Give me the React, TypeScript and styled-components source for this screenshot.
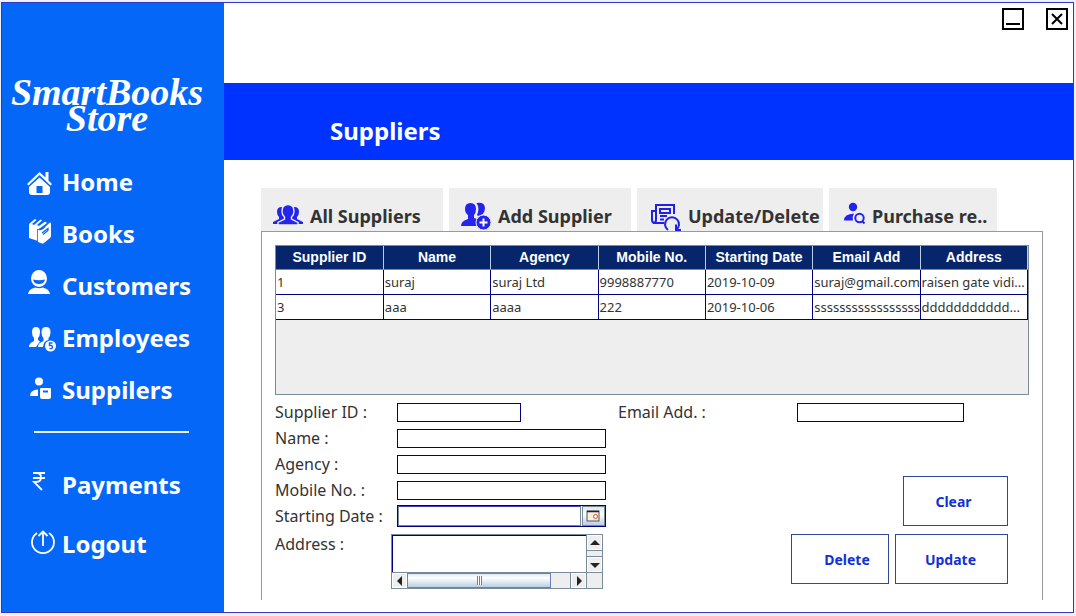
import React from "react";
import styled, { createGlobalStyle } from "styled-components";

const GlobalStyle = createGlobalStyle`
  *, *::before, *::after { box-sizing: border-box; }
  body {
    margin: 0;
    padding: 2px 2px 3px 1px;
    background: #eef1fb;
    color: #333;
    font-family: "Noto Sans", "Open Sans", sans-serif;
  }
  button, input, textarea { font: inherit; margin: 0; }
`;

const Window = styled.div`
  display: flex;
  min-height: calc(100vh - 5px);
  border: 1px solid #3535bd;
  background: #fff;
`;

const Sidebar = styled.aside`
  flex: 0 0 222px;
  padding-top: 76px;
  background: #0567f8;
  color: #fff;
`;

const Logo = styled.h1`
  margin: 0 0 25px;
  padding-right: 12px;
  font: italic 700 38px/26px "Liberation Serif", serif;
  text-align: center;
`;

const Nav = styled.nav`
  display: flex;
  flex-direction: column;
`;

const NavLink = styled.a<{ $tall?: boolean }>`
  display: flex;
  align-items: center;
  gap: 8px;
  height: ${(p) => (p.$tall ? 59 : 52)}px;
  padding-left: 24px;
  color: #fff;
  font-size: 24px;
  font-weight: 700;
  line-height: 32px;
  text-decoration: none;

  svg { flex: none; overflow: visible; }
`;

const Divider = styled.hr`
  width: 155px;
  height: 2px;
  margin: 15px 0 22px 32px;
  border: 0;
  background: #e8f1ff;
`;

const Main = styled.main`
  flex: 1;
  min-width: 0;
  display: flex;
  flex-direction: column;
`;

const TitleBar = styled.div`
  display: flex;
  justify-content: flex-end;
  gap: 22px;
  height: 80px;
  padding: 5px 5px 0 0;
`;

const WindowButton = styled.button`
  width: 22px;
  height: 22px;
  padding: 0;
  border: 2px solid #000;
  background: #fff;

  svg { display: block; }
`;

const Banner = styled.header`
  height: 77px;
  padding: 32px 0 0 106px;
  background: #0033ff;
`;

const Title = styled.h2`
  margin: 0;
  color: #fff;
  font-size: 24px;
  font-weight: 700;
  line-height: 32px;
`;

const Content = styled.section`
  flex: 1;
  display: flex;
  flex-direction: column;
  padding: 28px 30px 12px 37px;
`;

const Tabs = styled.div`
  display: flex;
  gap: 6px;
`;

const Tab = styled.button<{ $width: number }>`
  display: flex;
  align-items: center;
  gap: 7px;
  width: ${(p) => p.$width}px;
  height: 43px;
  padding: 12px 0 0 12px;
  overflow: hidden;
  border: 0;
  background: #eee;
  color: #333;
  font-size: 18px;
  font-weight: 700;
  white-space: nowrap;

  svg { flex: none; }
`;

const Panel = styled.div`
  flex: 1;
  padding: 13px 13px 0;
  border: 1px solid #999;
  border-bottom: 0;
`;

const TableFrame = styled.div`
  height: 150px;
  border: 1px solid #7a8a99;
  background: #eee;
`;

const Table = styled.table`
  width: 100%;
  border-collapse: collapse;
  table-layout: fixed;
  background: #fff;
`;

const HeadCell = styled.th`
  height: 23px;
  padding: 0;
  border-right: 1px solid #b8cfe5;
  border-bottom: 1px solid #7a8a99;
  background: #07256b;
  color: #fff;
  font: 700 14px/16px "Liberation Sans", Arial, sans-serif;
`;

const Cell = styled.td`
  height: 25px;
  padding: 0 0 0 1px;
  border-right: 1px solid #000080;
  border-bottom: 1px solid #000080;
  font-size: 13px;
  line-height: 20px;
  white-space: nowrap;
`;

const Form = styled.form`
  display: flex;
  padding-top: 4px;
`;

const Fields = styled.div`
  flex: 0 0 343px;
`;

const Side = styled.div`
  flex: 1;
  display: flex;
  flex-direction: column;
  justify-content: space-between;
  padding-right: 21px;
`;

const Row = styled.div`
  display: flex;
  align-items: center;
  height: 26px;
`;

const AddressRow = styled(Row)`
  align-items: flex-start;
  height: 60px;
  padding-top: 5px;
`;

const Label = styled.label<{ $width: number }>`
  flex: 0 0 ${(p) => p.$width}px;
  font-size: 16px;
  line-height: 20px;
  white-space: nowrap;
`;

const Input = styled.input<{ $width: number }>`
  width: ${(p) => p.$width}px;
  height: 19px;
  padding: 0 2px;
  border: 1px solid #000080;
  background: #fff;
  font-size: 14px;
  outline: 0;
`;

const DateField = styled.div`
  display: flex;
  width: 209px;
  height: 22px;
  border: 1px solid #000080;
  background: #fff;
`;

const DateInput = styled.input`
  flex: 1;
  min-width: 0;
  padding: 0 2px;
  border: 1px solid #7a8a99;
  border-top-color: #3d3dc8;
  background: #fff;
  font-size: 14px;
  outline: 0;
`;

const DateButton = styled.button`
  width: 23px;
  margin-left: 1px;
  padding: 0 0 0 3px;
  border: 1px solid #7a8a99;
  background: linear-gradient(#dde8f3, #fff 40%, #b8cfe5);

  svg { display: block; }
`;

const ScrollPane = styled.div`
  display: grid;
  grid-template-columns: 1fr 16px;
  grid-template-rows: 1fr 16px;
  width: 212px;
  height: 55px;
  border: 1px solid #7a8a99;
  background: #eee;
`;

const TextArea = styled.textarea`
  width: 100%;
  height: 100%;
  padding: 1px 2px;
  border: 0;
  border-top: 1px solid #000080;
  border-left: 1px solid #000080;
  background: #fff;
  font-size: 14px;
  overflow: hidden;
  outline: 0;
  resize: none;
`;

const VerticalBar = styled.div`
  display: flex;
  flex-direction: column;
  justify-content: space-between;
  border-left: 1px solid #7a8a99;
`;

const HorizontalBar = styled.div`
  display: flex;
  border-top: 1px solid #7a8a99;
`;

const Corner = styled.div`
  border-top: 1px solid #7a8a99;
  border-left: 1px solid #7a8a99;
`;

const Arrow = styled.button`
  display: grid;
  place-items: center;
  flex: 0 0 15px;
  min-width: 0;
  padding: 0;
  border: 1px solid #fff;
  background: #eee;
`;

const Thumb = styled.div`
  display: flex;
  align-items: center;
  justify-content: center;
  flex: 0 0 144px;
  border: 1px solid #6382bf;
  background: linear-gradient(#dde8f3, #fff 30%, #b8cfe5);
`;

const Grip = styled.span`
  width: 5px;
  height: 9px;
  background: repeating-linear-gradient(90deg, #6382bf 0 1px, #fff 1px 2px);
`;

const Track = styled.div`
  flex: 1;
  border-right: 1px solid #7a8a99;
`;

const VerticalTrack = styled.div`
  flex: 1;
  border-top: 1px solid #7a8a99;
  border-bottom: 1px solid #7a8a99;
`;

const Actions = styled.div`
  display: grid;
  grid-template-columns: 98px 113px;
  justify-content: end;
  gap: 8px 6px;
  padding-bottom: 5px;
`;

const ActionButton = styled.button<{ $kind?: "clear" | "delete" }>`
  height: 50px;
  padding: 0 2px 0 ${(p) => (p.$kind === "delete" ? 16 : 0)}px;
  border: 1px solid #2c489c;
  background: #fff;
  color: #1230d8;
  font-size: 14px;
  font-weight: 700;
  ${(p) => p.$kind === "clear" && "grid-column: 2; justify-self: end; width: 105px; padding-right: 4px;"}
`;

const iconProps = { width: 28, height: 28, viewBox: "0 0 28 28", fill: "currentColor", "aria-hidden": true };

const HomeIcon = () => (
  <svg {...iconProps}>
    <path d="M1 16 13.5 4 19.500 9.500V4h3v8.500L26 16l-1.500 1.500-11-10.500L2.500 17.500z" />
    <path d="M13.500 9.500 24 19v5q0 3-3 3H6q-3 0-3-3v-5zM10.500 18v7h6v-7z" fillRule="evenodd" />
  </svg>
);

const BooksIcon = () => (
  <svg {...iconProps} viewBox="0 4 28 28">
    <path d="M3 9q0-1 1-2l5-4 1.500 1L6 8l2 1 6.500-5.500 1.500 1L11 9l2 1 6-4.500 2 1.500-6 4.500-3 2V25l-3-1-6-2z" />
    <path d="M12 14q5 1 8-4l4-3.500q1 0 1 1V20q0 1-1 2l-6 5q-1 .5-2 .5l-4-1.500z" />
    <path d="m16 17 6-4.500v2l-5 4" fill="none" stroke="#0567f8" strokeWidth="1.200" />
    <path d="M11.500 13v12" stroke="#0567f8" strokeWidth=".8" />
  </svg>
);

const CustomerIcon = () => (
  <svg {...iconProps} viewBox="0 3 28 28">
    <ellipse cx="13" cy="9.500" rx="8" ry="8.500" />
    <path d="M7 10.500q6 1.500 12 0-1 4.500-6 4.500t-6-4.500z" fill="#0567f8" />
    <path d="M2 25q1-5 6-6l1-.5q4 1.500 8 0l1 .5q5 1 6 6z" />
  </svg>
);

const EmployeesIcon = () => (
  <svg {...iconProps}>
    <path d="M6 8q0-5 4-5t4 5q0 4-2 6v2l2 1.500-4 5.500H3q0-4 5-6v-3q-2-2-2-6z" />
    <path d="M15.500 8q0-5 4.500-5t4.500 5q0 4-2 6v2q-5 1-5.500 7h-5q0-4 5.500-6v-3q-2-2-2-6z" />
    <circle cx="24.500" cy="22" r="5.500" />
    <path d="M26.500 19h-3v2.500q3-.5 3 1.500t-3 1.500" fill="none" stroke="#0567f8" strokeWidth="1.400" />
  </svg>
);

const SupplierIcon = () => (
  <svg {...iconProps}>
    <circle cx="13" cy="5.500" r="4" />
    <path d="M4 20q0-6 8-6.500v6.500z" />
    <path d="M15 12q-1 0-1 1v8q0 2 2 2h7q2 0 2-2v-8q0-1-1-1zM17 14.500h5v2h-5z" fillRule="evenodd" />
  </svg>
);

const RupeeIcon = () => (
  <svg {...iconProps} fill="none" stroke="currentColor" strokeWidth="1.800">
    <path d="M7 2h12M7 7h12M7 2h4q4 0 4 4.500T10 11H8l8 8" />
  </svg>
);

const LogoutIcon = () => (
  <svg {...iconProps} fill="none" stroke="currentColor" strokeWidth="1.800">
    <path d="M11 3a11 11 0 1 0 12 0M17 16V1.500M12.500 6 17 1.500 21.500 6" />
  </svg>
);

const tabIcon = { width: 30, height: 30, viewBox: "0 0 30 30", fill: "#2424ee", "aria-hidden": true };

const GroupIcon = () => (
  <svg {...tabIcon}>
    <path d="M4 11q0-5 4.500-5T13 11q0 3-2 5v2l3 5H0v-2l6-3v-2q-2-2-2-5zM26 11q0-5-4.500-5T17 11q0 3 2 5v2l-3 5h14v-2l-6-3v-2q2-2 2-5z" />
    <path
      d="M9 10.500q0-7 6-7t6 7q0 3.500-2.500 5.500v2l6.500 3.500V24H5v-2.500l6.500-3.500v-2Q9 14 9 10.500z"
      stroke="#eee"
      strokeWidth="1.400"
    />
  </svg>
);

const AddUserIcon = () => (
  <svg {...tabIcon}>
    <path d="M4 8q0-6 5.500-6T15 8q0 4-2 6v3l3 1v7H0q0-5 7-7v-4q-3-2-3-6z" />
    <path d="M15.500 2q8-1.500 8.500 5 0 3-2 6l-5 2-1-1q3-7-.5-12z" />
    <circle cx="22.500" cy="21.500" r="7.500" stroke="#eee" strokeWidth="1" />
    <path d="M22.500 17.500v8M18.500 21.500h8" stroke="#fff" strokeWidth="2" />
  </svg>
);

const UpdateIcon = () => (
  <svg {...tabIcon} width={32} viewBox="-2 0 32 30" fill="none" stroke="#2020e8" strokeWidth="2">
    <path d="M13 22H4q-3 0-3-3V10h4M5 19V4h18v9M9 8h10v4H9zM9 15h7M9 18.500h4M5 19q0 3-3 3" />
    <path d="M17 29a7 7 0 1 1 8 0M25 23.500V29h5" />
  </svg>
);

const SearchUserIcon = () => (
  <svg {...tabIcon} width={24} viewBox="0 0 24 30">
    <circle cx="12" cy="6" r="4.200" />
    <path d="M3 19.500q0-6.500 10-7-2 3-1 7z" />
    <circle cx="18.500" cy="17" r="4.200" fill="none" stroke="#2424ee" strokeWidth="2" />
    <path d="m21 20 2.500 2.500" stroke="#2424ee" strokeWidth="2" />
  </svg>
);

const CalendarIcon = () => (
  <svg width="15" height="12" viewBox="0 0 15 12" aria-hidden="true">
    <rect x="1" y="1" width="12" height="10" fill="#f7efdc" stroke="#555" />
    <path d="M1 1.500h12" stroke="#222" strokeWidth="1.500" />
    <circle cx="9.500" cy="6.500" r="2" fill="#fff" stroke="#d44" />
  </svg>
);

const shapes = {
  up: "M0 7 5 2l5 5z",
  down: "M0 3h10L5 8z",
  left: "M7 0v10L2 5z",
  right: "M3 0v10l5-5z",
};

const ScrollArrow = ({ dir }: { dir: keyof typeof shapes }) => (
  <Arrow type="button" aria-label={`Scroll ${dir}`}>
    <svg width="10" height="10" viewBox="0 0 10 10" fill="#222" aria-hidden="true">
      <path d={shapes[dir]} />
    </svg>
  </Arrow>
);

const links = [
  { label: "Home", Icon: HomeIcon },
  { label: "Books", Icon: BooksIcon },
  { label: "Customers", Icon: CustomerIcon },
  { label: "Employees", Icon: EmployeesIcon },
  { label: "Suppilers", Icon: SupplierIcon },
];

const accountLinks = [
  { label: "Payments", Icon: RupeeIcon },
  { label: "Logout", Icon: LogoutIcon },
];

const tabs = [
  { label: "All Suppliers", width: 182, Icon: GroupIcon },
  { label: "Add Supplier", width: 182, Icon: AddUserIcon },
  { label: "Update/Delete", width: 186, Icon: UpdateIcon },
  { label: "Purchase re..", width: 168, Icon: SearchUserIcon },
];

const columns = ["Supplier ID", "Name", "Agency", "Mobile No.", "Starting Date", "Email Add", "Address"];

const rows = [
  ["1", "suraj", "suraj Ltd", "9998887770", "2019-10-09", "suraj@gmail.com", "raisen gate vidi..."],
  ["3", "aaa", "aaaa", "222", "2019-10-06", "sssssssssssssssss", "ddddddddddd..."],
];

const textFields = [
  { id: "supplier-id", label: "Supplier ID :", width: 124 },
  { id: "name", label: "Name :", width: 209 },
  { id: "agency", label: "Agency :", width: 209 },
  { id: "mobile", label: "Mobile No. :", width: 209 },
];

export default function App() {
  return (
    <>
      <GlobalStyle />
      <Window>
        <Sidebar>
          <Logo>
            SmartBooks
            <br />
            Store
          </Logo>
          <Nav>
            {links.map(({ label, Icon }) => (
              <NavLink key={label} href="#">
                <Icon />
                {label}
              </NavLink>
            ))}
            <Divider />
            {accountLinks.map(({ label, Icon }) => (
              <NavLink key={label} href="#" $tall>
                <Icon />
                {label}
              </NavLink>
            ))}
          </Nav>
        </Sidebar>
        <Main>
          <TitleBar>
            <WindowButton type="button" aria-label="Minimize">
              <svg width="18" height="18" viewBox="0 0 18 18">
                <path d="M2 14h14" stroke="#000" strokeWidth="2" />
              </svg>
            </WindowButton>
            <WindowButton type="button" aria-label="Close">
              <svg width="18" height="18" viewBox="0 0 18 18">
                <path d="m4 4 10 10M14 4 4 14" stroke="#000" strokeWidth="2" />
              </svg>
            </WindowButton>
          </TitleBar>
          <Banner>
            <Title>Suppliers</Title>
          </Banner>
          <Content>
            <Tabs role="tablist">
              {tabs.map(({ label, width, Icon }) => (
                <Tab key={label} type="button" role="tab" $width={width}>
                  <Icon />
                  {label}
                </Tab>
              ))}
            </Tabs>
            <Panel>
              <TableFrame>
                <Table>
                  <thead>
                    <tr>
                      {columns.map((c) => (
                        <HeadCell key={c} scope="col">{c}</HeadCell>
                      ))}
                    </tr>
                  </thead>
                  <tbody>
                    {rows.map((row) => (
                      <tr key={row[0]}>
                        {row.map((value, i) => (
                          <Cell key={columns[i]}>{value}</Cell>
                        ))}
                      </tr>
                    ))}
                  </tbody>
                </Table>
              </TableFrame>
              <Form>
                <Fields>
                  {textFields.map(({ id, label, width }) => (
                    <Row key={id}>
                      <Label htmlFor={id} $width={122}>{label}</Label>
                      <Input id={id} type="text" $width={width} />
                    </Row>
                  ))}
                  <Row>
                    <Label htmlFor="start-date" $width={122}>Starting Date :</Label>
                    <DateField>
                      <DateInput id="start-date" type="text" />
                      <DateButton type="button" aria-label="Choose date">
                        <CalendarIcon />
                      </DateButton>
                    </DateField>
                  </Row>
                  <AddressRow>
                    <Label htmlFor="address" $width={116}>Address :</Label>
                    <ScrollPane>
                      <TextArea id="address" />
                      <VerticalBar>
                        <ScrollArrow dir="up" />
                        <VerticalTrack />
                        <ScrollArrow dir="down" />
                      </VerticalBar>
                      <HorizontalBar>
                        <ScrollArrow dir="left" />
                        <Thumb>
                          <Grip />
                        </Thumb>
                        <Track />
                        <ScrollArrow dir="right" />
                      </HorizontalBar>
                      <Corner />
                    </ScrollPane>
                  </AddressRow>
                </Fields>
                <Side>
                  <Row>
                    <Label htmlFor="email" $width={179}>Email Add. :</Label>
                    <Input id="email" type="text" $width={167} />
                  </Row>
                  <Actions>
                    <ActionButton type="button" $kind="clear">Clear</ActionButton>
                    <ActionButton type="button" $kind="delete">Delete</ActionButton>
                    <ActionButton type="button">Update</ActionButton>
                  </Actions>
                </Side>
              </Form>
            </Panel>
          </Content>
        </Main>
      </Window>
    </>
  );
}
